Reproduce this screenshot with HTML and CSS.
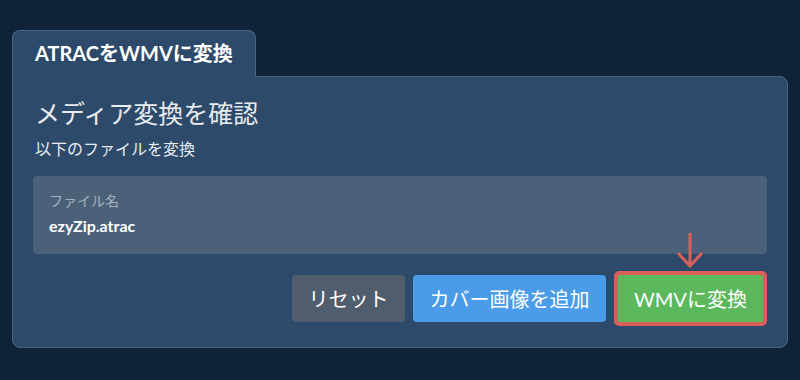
FILE: index.html
```html
<!DOCTYPE html>
<html lang="ja">
<head>
  <meta charset="UTF-8" />
  <meta name="viewport" content="width=device-width, initial-scale=1" />
  <title>ATRACをWMVに変換</title>
  <link rel="stylesheet" href="styles.css">
</head>
<body>

  <div class="wrapper">
    <div class="tab">ATRACをWMVに変換</div>

    <div class="card">
      <h2>メディア変換を確認</h2>
      <p class="subtitle">以下のファイルを変換</p>

      <div class="file-box">
        <span class="file-label">ファイル名</span>
        <span class="file-name">ezyZip.atrac</span>
      </div>

      <div class="actions">
        <button class="btn btn-reset">リセット</button>
        <button class="btn btn-cover">カバー画像を追加</button>
        <div class="convert-wrap">
          <svg class="arrow" width="30" height="36" viewBox="0 0 30 36">
            <path d="M15 1 V34 M3 21 L15 34 L27 21" fill="none" stroke="#d9605a" stroke-width="3" />
          </svg>
          <button class="btn btn-convert">WMVに変換</button>
        </div>
      </div>
    </div>
  </div>

</body>
</html>
```

FILE: styles.css
```css
body {
  margin: 0;
  font-family: Lato, "Noto Sans CJK JP", sans-serif;
  background-color: #0f2238;
  color: #fff;
}

.wrapper {
  padding: 30px 12px 0;
}

.tab {
  display: inline-block;
  background-color: #2d4a6a;
  border: 1px solid #4b6686;
  border-bottom: none;
  border-radius: 8px 8px 0 0;
  padding: 10px 22px 12px;
  font-size: 20px;
  font-weight: bold;
  line-height: 24px;
  position: relative;
  z-index: 1;
  margin-bottom: -1px;
}

.card {
  background-color: #2d4a6a;
  border: 1px solid #4b6686;
  border-radius: 0 8px 8px 8px;
  padding: 19px 20px 20px;
  box-sizing: border-box;
  height: 272px;
}

h2 {
  margin: 0;
  font-size: 25px;
  font-weight: normal;
  line-height: 34px;
  color: #e8ecf0;
  padding-left: 2px;
}

.subtitle {
  margin: 9px 0 17px;
  font-size: 16px;
  line-height: 20px;
  color: #e8ecf0;
  padding-left: 2px;
}

.file-box {
  background-color: #4b6179;
  border-radius: 4px;
  padding: 16px 16px;
  height: 78px;
  box-sizing: border-box;
  display: flex;
  flex-direction: column;
  gap: 6px;
}

.file-label {
  font-size: 14px;
  color: #a7b1bc;
  line-height: 18px;
}

.file-name {
  font-size: 16px;
  font-weight: bold;
  line-height: 20px;
}

.actions {
  display: flex;
  justify-content: flex-end;
  align-items: flex-end;
  gap: 8px;
  margin-top: 17px;
}

.btn {
  font-family: Lato, "Noto Sans CJK JP", sans-serif;
  font-size: 20px;
  color: #fff;
  border: none;
  border-radius: 4px;
  height: 47px;
  padding: 0;
  cursor: pointer;
}

.btn-reset {
  background-color: #4f5d6d;
  width: 113px;
  margin-bottom: 4px;
}

.btn-cover {
  background-color: #4a9be8;
  width: 193px;
  margin-bottom: 4px;
}

.convert-wrap {
  position: relative;
}

.arrow {
  position: absolute;
  left: 61px;
  top: -39px;
}

.btn-convert {
  background-color: #5cb85c;
  border: 4px solid #d9605a;
  border-radius: 5px;
  width: 153px;
  height: 55px;
  display: block;
}
```
